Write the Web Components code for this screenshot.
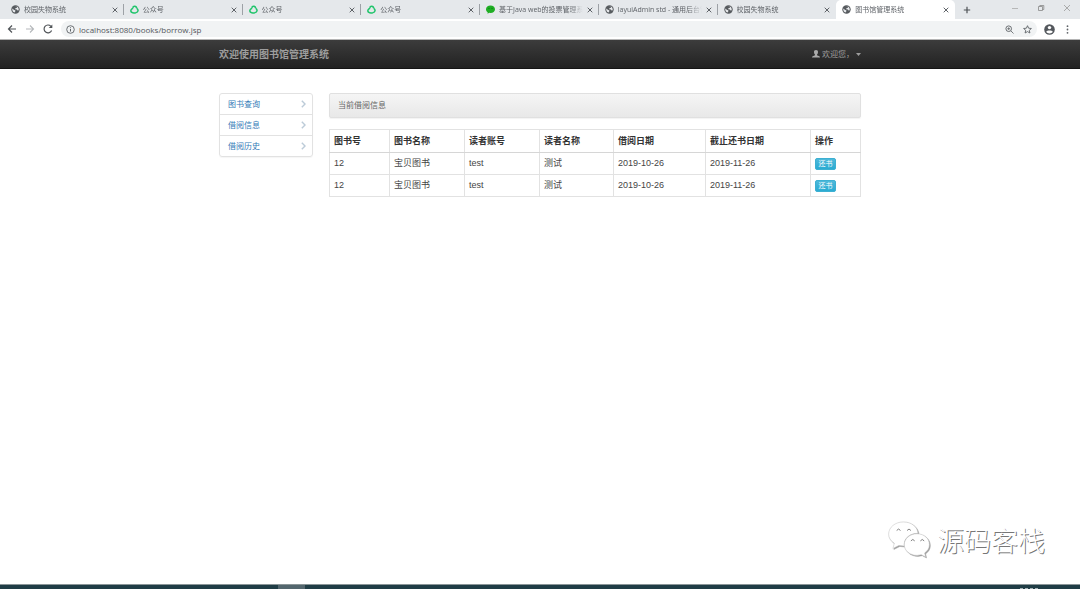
<!DOCTYPE html>
<html lang="zh-CN">
<head>
<meta charset="utf-8">
<title>图书馆管理系统</title>
<style>
html { height: 100%; }
body { margin: 0; min-height: 100%; display: flex; flex-direction: column; background: #fff; font-family: "Liberation Sans", "Noto Sans CJK SC", sans-serif; font-size: 9px; line-height: 13px; color: #444; }
</style>
</head>
<body>
<browser-chrome></browser-chrome>
<site-navbar></site-navbar>
<library-page></library-page>
<water-mark>源码客栈</water-mark>
<task-bar></task-bar>

<script>
const icons = {
  globe: '<svg viewBox="0 0 16 16"><circle cx="8" cy="8" r="7.5" fill="#575b5f"/><path d="M2.2 6.2 5.6 9l2 .4v2.2l-1.4 1.6C3.600 12.600 2 10.300 2.200 6.200zM8 2l3.200.7-.8 2.300-2.600.8-.4 1.700 3.200.5 1 1.700 2.200-.2C14 6 13 3 9 1.800z" fill="#e8eaed"/></svg>',
  ring: '<svg viewBox="0 0 16 16" fill="none" stroke="#20c46b" stroke-width="2.700"><path d="M5 5.200C5.500 1 11.500.8 12 6"/><path d="M12 6c4 2.500 2.300 8-2.500 7.800"/><path d="M10 13.800C4.500 15.200.2 12.500 2 8.500 2.700 7 4 6 5.800 6.200"/></svg>',
  wechat: '<svg viewBox="0 0 16 16"><path d="M8 .8c4.600 0 8 2.900 8 6.700s-3.400 6.700-8 6.700l-2.300-.4L2.700 15.500l.3-2.700C1.100 11.500 0 9.700 0 7.500 0 3.700 3.400.8 8 .8z" fill="#1fae24"/><circle cx="5.300" cy="5.800" r="1.100" fill="#0a7a10"/><circle cx="10.700" cy="5.800" r="1.100" fill="#0a7a10"/></svg>'
};

function define(name, html, setup) {
  const template = document.createElement('template');
  template.innerHTML = '<style>*{box-sizing:border-box}button{border:0;padding:0;margin:0;background:none;font:inherit;color:inherit;display:block}svg{display:block}a{text-decoration:none}</style>' + html;
  customElements.define(name, class extends HTMLElement {
    constructor() {
      super();
      this.attachShadow({ mode: 'open' }).append(template.content.cloneNode(true));
    }
    connectedCallback() { if (setup) setup(this, this.shadowRoot); }
  });
}

define('browser-tab', `
<style>
:host { flex: 1 1 0; min-width: 0; display: flex; align-items: center; height: 19px; padding: 0 6px; gap: 4px; position: relative; }
:host::after { content: ""; position: absolute; right: 0; top: 4px; width: 1px; height: 11px; background: #9da1a6; }
:host([active])::after, :host([last])::after { display: none; }
:host([active]) { background: #fff; border-radius: 5px 5px 0 0; }
.icon { flex: none; width: 9px; height: 9px; }
.title { flex: 1; min-width: 0; overflow: hidden; white-space: nowrap; font-size: 7px; line-height: 11px; color: #5f6368; -webkit-mask-image: linear-gradient(90deg, #000 calc(100% - 14px), transparent); mask-image: linear-gradient(90deg, #000 calc(100% - 14px), transparent); }
button { flex: none; width: 6px; height: 6px; }
</style>
<span class="icon"></span><span class="title"><slot></slot></span>
<button aria-label="关闭标签页"><svg viewBox="0 0 6 6" stroke="#5f6368" stroke-width="1"><path d="M.7.700 5.300 5.300M5.300.7.7 5.300"/></svg></button>`,
(el, root) => { root.querySelector('.icon').innerHTML = icons[el.getAttribute('icon')]; });

define('browser-chrome', `
<style>
:host { display: block; font-family: "Open Sans", "Noto Sans CJK SC", sans-serif; }
.strip { display: flex; align-items: center; height: 19px; padding-left: 5px; background: #e5e8eb; }
.tabs { flex: 1; display: flex; min-width: 0; }
.controls { flex: none; width: 125px; display: flex; align-items: center; padding: 0 9px 0 8px; }
.controls svg { width: 8px; height: 8px; fill: none; }
.new { margin-right: auto; }
.window { display: flex; gap: 18px; padding-bottom: 3px; }
.bar { display: flex; align-items: center; height: 21px; padding: 0 11px 0 7px; background: #fff; border-bottom: 1px solid #b4b4b4; }
.nav { display: flex; gap: 8px; width: 54px; }
.nav svg { width: 10px; height: 10px; }
.address { flex: 1; display: flex; align-items: center; height: 16px; border-radius: 8px; background: #f1f3f4; padding: 0 5px; gap: 4px; }
.address svg { width: 9px; height: 9px; }
input { flex: 1; min-width: 0; height: 14px; border: 0; padding: 0; background: none; font: inherit; font-size: 8px; color: #53575b; outline: 0; }
.star { margin-left: 5px; }
.end { display: flex; align-items: center; gap: 11px; padding-left: 7px; }
.end svg { height: 11px; }
</style>
<div class="strip">
  <div class="tabs">
    <browser-tab icon="globe">校园失物系统</browser-tab>
    <browser-tab icon="ring">公众号</browser-tab>
    <browser-tab icon="ring">公众号</browser-tab>
    <browser-tab icon="ring">公众号</browser-tab>
    <browser-tab icon="wechat">基于Java web的投票管理系统</browser-tab>
    <browser-tab icon="globe">layuiAdmin std - 通用后台管理</browser-tab>
    <browser-tab icon="globe" last>校园失物系统</browser-tab>
    <browser-tab icon="globe" active>图书馆管理系统</browser-tab>
  </div>
  <div class="controls">
    <button class="new" aria-label="新标签页"><svg viewBox="0 0 8 8" stroke="#4d5155" stroke-width="1.200"><path d="M4 .8v6.400M.8 4h6.400"/></svg></button>
    <div class="window">
      <button aria-label="最小化"><svg viewBox="0 0 8 8" stroke="#aaa" stroke-width=".8"><path d="M1 4.500h6"/></svg></button>
      <button aria-label="还原"><svg viewBox="0 0 8 8" stroke="#888" stroke-width=".8"><path d="M1.500 2.500h4v4h-4zM2.800 2.500v-1h4v4H5.500"/></svg></button>
      <button aria-label="关闭"><svg viewBox="0 0 8 8" stroke="#999" stroke-width=".8"><path d="M1 1l6 6M7 1 1 7"/></svg></button>
    </div>
  </div>
</div>
<div class="bar">
  <div class="nav">
    <button aria-label="后退"><svg viewBox="0 0 10 10" fill="none" stroke="#505458" stroke-width="1.200"><path d="M9 5H1.500M5 1.500 1.500 5 5 8.500"/></svg></button>
    <button aria-label="前进"><svg viewBox="0 0 10 10" fill="none" stroke="#b5b8bb" stroke-width="1.100"><path d="M1 5h7.500M5 1.500 8.500 5 5 8.500"/></svg></button>
    <button aria-label="刷新"><svg viewBox="0 0 10 10" fill="none" stroke="#505458" stroke-width="1.200"><path d="M8.600 6.400A3.900 3.900 0 1 1 7.900 2.300"/><path d="M9.300.5v3.600H5.700z" fill="#505458" stroke="none"/></svg></button>
  </div>
  <div class="address">
    <svg viewBox="0 0 9 9" fill="none" stroke="#5f6368"><circle cx="4.500" cy="4.500" r="3.800" stroke-width=".9"/><path d="M4.500 4v2.500M4.500 2.300v.9" stroke-width="1"/></svg>
    <input aria-label="地址" value="localhost:8080/books/borrow.jsp">
    <button aria-label="缩放"><svg viewBox="0 0 9 9" fill="none" stroke="#6a6e72"><circle cx="3.700" cy="3.700" r="2.800"/><path d="M5.800 5.800 8.500 8.500M2.300 3.700h2.800M3.700 2.300v2.800" stroke-width=".9"/></svg></button>
    <button class="star" aria-label="收藏"><svg viewBox="0 0 9 9" fill="none" stroke="#5f6368" stroke-width=".9"><path d="M4.500.7 5.600 3.200l2.800.3-2.100 1.800.6 2.700-2.400-1.400L2.100 8l.6-2.700L.6 3.500l2.800-.3z"/></svg></button>
  </div>
  <div class="end">
    <button aria-label="用户"><svg width="11" viewBox="0 0 11 11"><circle cx="5.500" cy="5.500" r="5.300" fill="#54585d"/><circle cx="5.500" cy="3.600" r="1.700" fill="#fff"/><path d="M2.200 7.800C3 6 8 6 8.800 7.800 7.500 10 3.500 10 2.200 7.800z" fill="#fff"/></svg></button>
    <button aria-label="菜单"><svg width="3" viewBox="0 0 3 11" fill="#5f6368"><circle cx="1.500" cy="2.200" r=".9"/><circle cx="1.500" cy="5.500" r=".9"/><circle cx="1.500" cy="8.800" r=".9"/></svg></button>
  </div>
</div>`);

define('site-navbar', `
<style>
:host { display: block; background: linear-gradient(#3c3c3c, #222); border-bottom: 1px solid #151515; }
nav { max-width: 642px; height: 28px; margin: 0 auto; display: flex; align-items: center; justify-content: space-between; color: #9d9d9d; }
.brand { font-size: 10px; font-weight: bold; color: inherit; }
button { display: flex; align-items: center; gap: 2px; font-size: 8px; }
.user { width: 8px; height: 8px; }
.caret { width: 5px; height: 3px; }
</style>
<nav>
  <a class="brand" href="#">欢迎使用图书馆管理系统</a>
  <button><svg class="user" viewBox="0 0 8 8" fill="#aaa"><path d="M4 0c1.400 0 2.100.9 2 2.300C5.900 3.500 5.500 4.200 5 4.600v.7l2.300 1c.4.2.7.7.7 1.200H0c0-.5.3-1 .7-1.200l2.300-1v-.7C2.500 4.200 2.100 3.500 2 2.300 1.900.9 2.600 0 4 0z"/></svg><span>欢迎您，</span><svg class="caret" viewBox="0 0 5 3" fill="#9d9d9d"><path d="M0 0h5L2.500 3z"/></svg></button>
</nav>`);

define('side-link', `
<style>
:host { display: block; border-top: 1px solid #e2e2e2; }
:host(:first-child) { border-top: 0; }
a { display: flex; align-items: center; justify-content: space-between; height: 20px; padding: 0 6px 0 8px; color: #337ab7; font-size: 8px; }
svg { width: 5px; height: 8px; }
</style>
<a href="#"><slot></slot><svg viewBox="0 0 5 8" fill="none" stroke="#bccbd8" stroke-width="1.400"><path d="M.8.800 4 4 .8 7.200"/></svg></a>`);

define('side-menu', `
<style>
:host { display: block; border: 1px solid #e2e2e2; border-radius: 3px; box-shadow: 0 1px 1px rgba(0,0,0,.04); }
</style>
<slot></slot>`);

define('panel-heading', `
<style>
:host { display: block; height: 25px; padding: 0 8px; border: 1px solid #e0e0e0; border-radius: 2px; background: linear-gradient(#f5f5f5, #e8e8e8); font-size: 8px; line-height: 23px; color: #666; box-shadow: 0 1px 1px rgba(0,0,0,.05); }
</style>
<slot></slot>`);

define('borrow-table', `
<style>
:host { display: block; }
table { width: 100%; table-layout: fixed; border-collapse: collapse; }
th, td { border: 1px solid #e2e2e2; height: 22px; padding: 0 4px; text-align: left; line-height: 13px; white-space: nowrap; }
thead th { height: 23px; border-bottom-color: #d6d6d6; color: #333; }
td button { height: 12px; width: 21px; border-radius: 2px; border: 1px solid #3db0d2; background: linear-gradient(#4fb9da, #2aabd2); color: #fff; font-size: 7px; line-height: 10px; text-align: center; white-space: nowrap; }
</style>
<table>
  <colgroup><col style="width:60px"><col style="width:75px"><col style="width:75px"><col style="width:74px"><col style="width:92px"><col style="width:105px"><col></colgroup>
  <thead><tr><th>图书号</th><th>图书名称</th><th>读者账号</th><th>读者名称</th><th>借阅日期</th><th>截止还书日期</th><th>操作</th></tr></thead>
  <tbody>
    <tr><td>12</td><td>宝贝图书</td><td>test</td><td>测试</td><td>2019-10-26</td><td>2019-11-26</td><td><button>还书</button></td></tr>
    <tr><td>12</td><td>宝贝图书</td><td>test</td><td>测试</td><td>2019-10-26</td><td>2019-11-26</td><td><button>还书</button></td></tr>
  </tbody>
</table>`);

define('library-page', `
<style>
:host { flex: 1; display: block; padding: 24px 0; }
.layout { max-width: 642px; margin: 0 auto; display: grid; grid-template-columns: 94px minmax(0, 1fr); gap: 16px; align-items: start; }
main { display: grid; gap: 11px; }
</style>
<div class="layout">
  <side-menu><side-link>图书查询</side-link><side-link>借阅信息</side-link><side-link>借阅历史</side-link></side-menu>
  <main><panel-heading>当前借阅信息</panel-heading><borrow-table></borrow-table></main>
</div>`);

define('water-mark', `
<style>
:host { position: absolute; right: 35px; bottom: 28px; display: flex; align-items: flex-end; gap: 6px; font-size: 27px; line-height: 38px; color: #fff; text-shadow: 1px 1px 0 #777; font-weight: 300; }
svg { width: 44px; height: 36px; fill: #fff; overflow: visible; margin-bottom: 4px; }
.shape { stroke: #bbb; stroke-width: .5; filter: drop-shadow(1px 1px 0 #999); }
</style>
<svg viewBox="0 0 44 38"><path class="shape" d="M16 1c8.500 0 15 5 15.500 12C23 13 17 18 17 24.500l.3 2-6-.7L5 29l1.500-5.500C2.800 21 .5 18 .5 14 .5 6.500 7.500 1 16 1z"/><path class="shape" d="M30.500 13.500c7.500 0 13 5 13 11.500 0 3.700-2 6.500-5 8.700L39.500 38l-4.500-2.500-4.500.8c-7.500 0-13.500-5-13.500-11.300s6-11.500 13.500-11.500z"/><g fill="none" stroke="#777"><path d="M9 10q2-3 4 0M20 10q2-3 4 0M24 21q2-3 4 0M34 21q2-3 4 0"/></g></svg>
<slot></slot>`);

define('task-bar', `
<style>
:host { display: flex; height: 4px; border-top: 1px solid #8b9698; background: #203d46; padding: 0 42px 0 278px; justify-content: space-between; }
.active { width: 27px; background: #53666e; }
.clock { display: flex; gap: 2px; align-items: end; }
.clock i { width: 3px; height: 1px; background: #a5b2b6; }
</style>
<span class="active"></span><span class="clock"><i></i><i></i><i></i><i></i></span>`);
</script>
</body>
</html>
